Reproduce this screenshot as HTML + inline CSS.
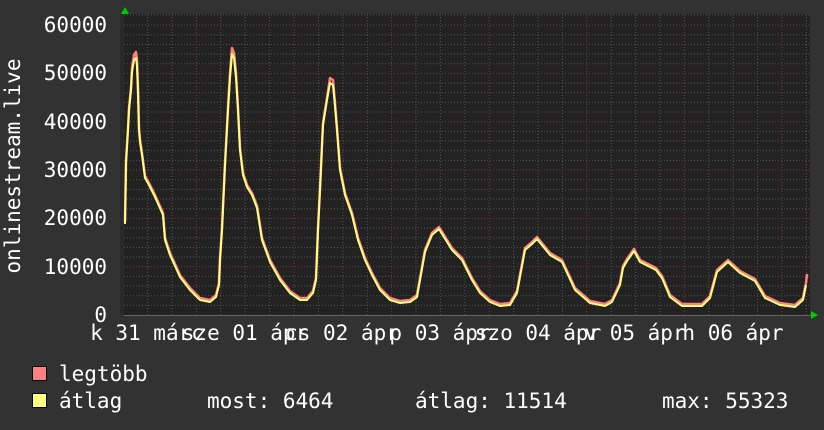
<!DOCTYPE html>
<html><head><meta charset="utf-8"><style>
html,body{margin:0;padding:0;background:#323232;}
svg{display:block}
text{font-family:"DejaVu Sans Mono","Liberation Mono",monospace;font-size:21px;fill:#fff}
</style></head><body>
<svg width="824" height="430" xmlns="http://www.w3.org/2000/svg">
<rect width="824" height="430" fill="#323232"/>
<rect x="124" y="14" width="686" height="301" fill="#222"/>
<rect x="120" y="14" width="4" height="301" fill="#2a2a2a"/>
<g id="grid" stroke-width="1" stroke-dasharray="1,2">
<g stroke="#555">
<path d="M124 305.3H810M124 295.7H810M124 286H810M124 276.4H810M124 257H810M124 247.4H810M124 237.7H810M124 228H810M124 208.7H810M124 199H810M124 189.4H810M124 179.7H810M124 160.4H810M124 150.7H810M124 141H810M124 131.4H810M124 112H810M124 102.4H810M124 92.7H810M124 83H810M124 63.7H810M124 54H810M124 44.4H810M124 34.7H810M124 15H810"/>
<path d="M147.6 14V315M172 14V315M220.8 14V315M245.2 14V315M269.6 14V315M318.4 14V315M342.8 14V315M367.2 14V315M416 14V315M440.4 14V315M464.8 14V315M513.6 14V315M538 14V315M562.4 14V315M611.2 14V315M635.6 14V315M660 14V315M708.8 14V315M733.2 14V315M757.6 14V315M806.4 14V315"/>
</g>
<g stroke="#7a3a3a">
<path d="M124 266.7H810M124 218.4H810M124 170H810M124 121.7H810M124 73.4H810M124 25H810"/>
<path d="M196.4 14V318M294 14V318M391.6 14V318M489.2 14V318M586.8 14V318M684.4 14V318M782 14V318"/>
</g>
</g>
<line x1="124" y1="315.5" x2="812" y2="315.5" stroke="#666"/>
<polygon points="121,14 125,7 129,14" fill="#0c0"/>
<polygon points="811,311 818,315 811,319" fill="#0c0"/>
<g fill="none" stroke-linejoin="round">
<polyline stroke="#ff8080" stroke-width="2.5" transform="translate(0,-2)" points="125,224 126,163 128,130 129,110 131,90 132,70 134,57 136,54 137,62 138,90 139,130 140,142 142,155 145,178 149,185 155,197 163,215 165,240 170,255 180,277 190,290 200,300 210,302 216,297 219,285 220,260 222,230 225,165 228,110 230,75 232,50 234,55 236,75 238,110 240,150 243,175 247,187 252,195 257,208 262,240 270,262 280,280 290,293 300,300 307,300 313,293 316,280 318,230 320,190 323,125 327,100 330,80 333,82 335,105 337,130 340,170 345,195 352,215 358,240 365,260 372,275 380,290 390,300 400,303 410,302 417,297 425,252 432,235 439,229 452,250 462,260 472,280 480,293 490,302 500,306 510,305 517,293 525,250 532,244 537,239 550,255 562,262 575,290 590,303 605,306 612,302 620,285 623,268 627,261 634,251 640,262 648,266 656,270 662,278 670,297 682,306 702,306 710,298 717,272 728,262 740,273 755,281 765,298 780,305 795,307 803,300 806,285 807,276"/>
<polyline stroke="#ffff80" stroke-width="2" points="125,224 126,163 128,130 129,110 131,90 132,72 134,60 136,58 137,66 138,92 139,130 140,142 142,155 145,178 149,185 155,197 163,215 165,240 170,255 180,277 190,290 200,300 210,302 216,297 219,285 220,260 222,230 225,165 228,110 230,78 232,54 234,58 236,78 238,110 240,150 243,175 247,187 252,195 257,208 262,240 270,262 280,280 290,293 300,300 307,300 313,293 316,280 318,230 320,190 323,125 327,100 330,83 333,85 335,106 337,130 340,170 345,195 352,215 358,240 365,260 372,275 380,290 390,300 400,303 410,302 417,297 425,252 432,235 439,229 452,250 462,260 472,280 480,293 490,302 500,306 510,305 517,293 525,250 532,244 537,239 550,255 562,262 575,290 590,303 605,306 612,302 620,285 623,268 627,261 634,251 640,262 648,266 656,270 662,278 670,297 682,306 702,306 710,298 717,272 728,262 740,273 755,281 765,298 780,305 795,307 803,300 806,285"/>
</g>
<g text-anchor="end">
<text x="107" y="32">60000</text>
<text x="107" y="80">50000</text>
<text x="107" y="129">40000</text>
<text x="107" y="177">30000</text>
<text x="107" y="225">20000</text>
<text x="107" y="274">10000</text>
<text x="107" y="322">0</text>
</g>
<text transform="translate(20,166) rotate(-90)" text-anchor="middle">onlinestream.live</text>
<g text-anchor="middle">
<text x="147" y="340">k 31 márc</text>
<text x="245" y="340">sze 01 ápr</text>
<text x="342" y="340">cs 02 ápr</text>
<text x="440" y="340">p 03 ápr</text>
<text x="538" y="340">szo 04 ápr</text>
<text x="635" y="340">v 05 ápr</text>
<text x="733" y="340">h 06 ápr</text>
</g>
<rect x="32.5" y="366.5" width="14" height="14" fill="#ff8080" stroke="#000"/>
<rect x="32.5" y="393.5" width="14" height="14" fill="#ffff80" stroke="#000"/>
<text x="59" y="381">legtöbb</text>
<text x="59" y="408">átlag</text>
<text x="207" y="408">most: 6464</text>
<text x="415" y="408">átlag: 11514</text>
<text x="662" y="408">max: 55323</text>
</svg>
</body></html>
